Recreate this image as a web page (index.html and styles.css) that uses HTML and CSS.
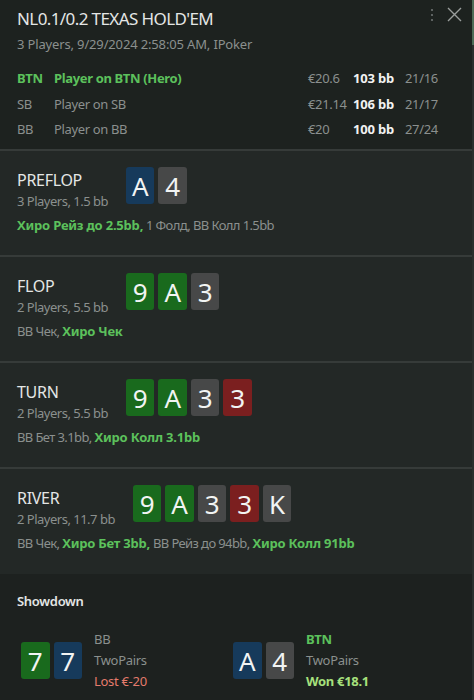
FILE: index.html
```html
<!DOCTYPE html>
<html lang="ru">
<head>
<meta charset="utf-8">
<title>Hand</title>
<link rel="stylesheet" href="styles.css">
</head>
<body>
<div class="frame">
  <div class="panel">
    <header class="head">
      <div class="title-row">
        <h1 class="title">NL0.1/0.2 TEXAS HOLD'EM</h1>
        <div class="tools">
          <svg class="kebab" width="4" height="14" viewBox="0 0 4 14"><circle cx="2" cy="2" r="1.1"/><circle cx="2" cy="7" r="1.1"/><circle cx="2" cy="12" r="1.1"/></svg>
          <svg class="close" width="15" height="15" viewBox="0 0 15 15"><path d="M1 1 L14 14 M14 1 L1 14"/></svg>
        </div>
      </div>
      <div class="sub">3 Players, 9/29/2024 2:58:05 AM, IPoker</div>
      <div class="players">
        <div class="prow hero"><span>BTN</span><span>Player on BTN (Hero)</span><span class="stk">€20.6</span><span class="bb">103 bb</span><span class="ratio">21/16</span></div>
        <div class="prow"><span>SB</span><span>Player on SB</span><span class="stk">€21.14</span><span class="bb">106 bb</span><span class="ratio">21/17</span></div>
        <div class="prow"><span>BB</span><span>Player on BB</span><span class="stk">€20</span><span class="bb">100 bb</span><span class="ratio">27/24</span></div>
      </div>
    </header>

    <section class="street">
      <div class="street-top">
        <div class="sinfo"><div class="sname">PREFLOP</div><div class="smeta">3 Players, 1.5 bb</div></div>
        <div class="cards"><span class="card blue">A</span><span class="card grey">4</span></div>
      </div>
      <div class="actions"><b>Хиро Рейз до 2.5bb,</b> 1 Фолд, BB Колл 1.5bb</div>
    </section>

    <section class="street">
      <div class="street-top">
        <div class="sinfo"><div class="sname">FLOP</div><div class="smeta">2 Players, 5.5 bb</div></div>
        <div class="cards"><span class="card green">9</span><span class="card green">A</span><span class="card grey">3</span></div>
      </div>
      <div class="actions">BB Чек, <b>Хиро Чек</b></div>
    </section>

    <section class="street">
      <div class="street-top">
        <div class="sinfo"><div class="sname">TURN</div><div class="smeta">2 Players, 5.5 bb</div></div>
        <div class="cards"><span class="card green">9</span><span class="card green">A</span><span class="card grey">3</span><span class="card red">3</span></div>
      </div>
      <div class="actions">BB Бет 3.1bb, <b>Хиро Колл 3.1bb</b></div>
    </section>

    <section class="street last">
      <div class="street-top">
        <div class="sinfo"><div class="sname">RIVER</div><div class="smeta">2 Players, 11.7 bb</div></div>
        <div class="cards"><span class="card green">9</span><span class="card green">A</span><span class="card grey">3</span><span class="card red">3</span><span class="card grey">K</span></div>
      </div>
      <div class="actions">BB Чек, <b>Хиро Бет 3bb,</b> BB Рейз до 94bb, <b>Хиро Колл 91bb</b></div>
    </section>

    <section class="showdown">
      <div class="sd-title">Showdown</div>
      <div class="sd-grid">
        <div class="sd-player">
          <div class="cards"><span class="card green">7</span><span class="card blue">7</span></div>
          <div class="sd-info"><div>BB</div><div>TwoPairs</div><div class="lost">Lost €-20</div></div>
        </div>
        <div class="sd-player">
          <div class="cards"><span class="card blue">A</span><span class="card grey">4</span></div>
          <div class="sd-info"><div class="pos-hero">BTN</div><div>TwoPairs</div><div class="won">Won €18.1</div></div>
        </div>
      </div>
    </section>
  </div>
  <div class="scroll"><div class="thumb"></div></div>
</div>
</body>
</html>
```

FILE: styles.css
```css
* { box-sizing: border-box; }
html, body { margin: 0; padding: 0; }
body {
  background: #1d211f;
  font-family: "Noto Sans", "Open Sans", sans-serif;
  color: #8b908e;
  width: 474px;
  height: 700px;
  overflow: hidden;
}
.frame { display: flex; height: 700px; }
.panel { flex: 1; display: flex; flex-direction: column; }
.scroll { width: 2px; background: #2a2f2d; }
.thumb { height: 45px; background: #4d6b57; }

.head {
  background: #1d221f;
  height: 151px;
  padding: 7px 0 0 17px;
  border-bottom: 2px solid #363b39;
}
.title-row { display: flex; align-items: flex-start; justify-content: space-between; }
.title {
  margin: 0;
  font-size: 17px;
  font-weight: 400;
  line-height: 24px;
  letter-spacing: -0.6px;
  color: #e4e6e5;
}
.tools { display: flex; align-items: center; gap: 13px; padding: 0 10px 0 0; }
.kebab circle { fill: #6f7472; }
.close path { stroke: #9a9e9c; stroke-width: 1.4; fill: none; }
.sub { font-size: 13px; line-height: 18px; margin-top: 4px; letter-spacing: -0.15px; }
.players { margin-top: 13px; }
.prow {
  display: grid;
  grid-template-columns: 37px 254px 45px 52px auto;
  font-size: 13px;
  line-height: 25.5px;
  letter-spacing: -0.35px;
}
.prow .bb { color: #f2f2f2; font-weight: 700; letter-spacing: -0.2px; }
.prow.hero { color: #5cc15c; font-weight: 700; }
.prow.hero .stk, .prow.hero .ratio { color: #8b908e; font-weight: 400; }
.prow.hero .bb { color: #f2f2f2; }

.street {
  background: #232826;
  height: 106px;
  padding: 16px 17px 0;
  border-bottom: 2px solid #363b39;
}
.street.last { border-bottom: none; height: 105px; }
.street-top { display: flex; align-items: flex-start; gap: 18px; }
.sinfo { padding-top: 3px; }
.sname { font-size: 16px; line-height: 21px; color: #e4e6e5; letter-spacing: -0.3px; }
.smeta { font-size: 13px; line-height: 21px; letter-spacing: -0.5px; }
.actions { font-size: 13px; line-height: 18px; margin-top: 4px; letter-spacing: -0.6px; }
.actions b { letter-spacing: -0.2px; }
.actions b, .won, .pos-hero { color: #5cc15c; font-weight: 700; }

.cards { display: flex; gap: 4px; }
.card {
  width: 28.5px;
  height: 37px;
  border-radius: 3px;
  display: flex;
  align-items: center;
  justify-content: center;
  font-size: 26px;
  color: #f2f4f3;
  line-height: 1;
}
.card.blue { background: #163a5b; }
.card.grey { background: #474848; }
.card.green { background: #196a1d; }
.card.red { background: #7b1f1f; }

.showdown { background: #1d211f; flex: 1; padding: 18px 21px 0 17px; }
.sd-title { font-size: 13px; line-height: 18px; color: #e4e6e5; font-weight: 600; letter-spacing: -0.3px; }
.sd-grid { display: grid; grid-template-columns: 212px 212px; margin-top: 19px; padding-left: 4px; }
.sd-player { display: flex; align-items: center; gap: 12px; }
.sd-info { font-size: 13px; line-height: 21px; margin-top: 0; letter-spacing: -0.3px; }
.lost { color: #e47b6c; }
.won { color: #a6e07c; }
```
